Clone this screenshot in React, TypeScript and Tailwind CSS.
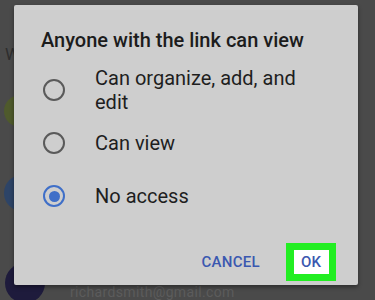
import React from "react";

function Radio({ checked }: { checked?: boolean }) {
  if (checked) {
    return (
      <div className="w-[22px] h-[22px] rounded-full border-[2.5px] border-[#3f6fc8] flex items-center justify-center shrink-0">
        <div className="w-[11px] h-[11px] rounded-full bg-[#3f6fc8]" />
      </div>
    );
  }
  return <div className="w-[22px] h-[22px] rounded-full border-[2px] border-[#5a5a5a] shrink-0" />;
}

export default function App() {
  return (
    <div
      className="relative w-[375px] h-[300px] overflow-hidden bg-[#4a4a4a]"
      style={{ fontFamily: "Roboto, 'Noto Sans', sans-serif" }}
    >
      {/* background content */}
      <div className="absolute left-[5px] top-[42px] text-[17px] text-[#2e2e2e]">W</div>
      <div className="absolute left-[4px] top-[95px] w-[40px] h-[32px] rounded-full bg-[#4f5a2c]" />
      <div className="absolute left-[4px] top-[175px] w-[40px] h-[36px] rounded-full bg-[#2d4467]" />
      <div className="absolute left-[5px] top-[263px] w-[40px] h-[40px] rounded-full bg-[#1e1b3c]" />
      <div className="absolute left-[70px] top-[284px] text-[14px] leading-[16px] text-[#5c5c5c] tracking-wide">
        richardsmith@gmail.com
      </div>

      {/* dialog */}
      <div className="absolute left-[14px] top-[5px] w-[344px] h-[280px] bg-[#cecece] rounded-[2px] shadow-[0_2px_4px_rgba(0,0,0,0.4)] flex flex-col">
        <div className="pl-[27px] pt-[22px] text-[20px] font-medium text-[#1c1c1c] leading-[26px]">
          Anyone with the link can view
        </div>
        <div className="flex flex-col mt-[10px]">
          <div className="flex items-center h-[54px]">
            <div className="pl-[29px] w-[81px]">
              <Radio />
            </div>
            <div className="text-[20px] leading-[24px] text-[#1e1e1e] w-[215px]">
              Can organize, add, and edit
            </div>
          </div>
          <div className="flex items-center h-[52px]">
            <div className="pl-[29px] w-[81px]">
              <Radio />
            </div>
            <div className="text-[20px] leading-[24px] text-[#1e1e1e]">Can view</div>
          </div>
          <div className="flex items-center h-[54px]">
            <div className="pl-[29px] w-[81px]">
              <Radio checked />
            </div>
            <div className="text-[20px] leading-[24px] text-[#1e1e1e]">No access</div>
          </div>
        </div>
        <div className="flex-1" />
        <div className="flex items-center justify-end pr-[22px] pb-[4px] gap-[26px]">
          <div className="text-[15px] font-medium text-[#3b58b0] tracking-[0.3px]">CANCEL</div>
          <div className="w-[50px] h-[38px] bg-[#22ee22] flex items-center justify-center">
            <div className="w-[35px] h-[24px] bg-white flex items-center justify-center text-[15px] font-medium text-[#3b58b0]">
              OK
            </div>
          </div>
        </div>
      </div>
    </div>
  );
}
